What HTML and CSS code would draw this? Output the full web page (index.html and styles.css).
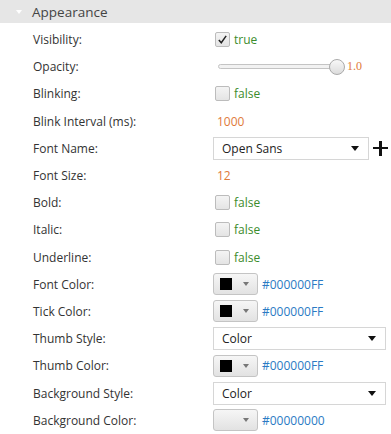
FILE: index.html
```html
<!DOCTYPE html>
<html>
<head>
<meta charset="utf-8">
<link rel="stylesheet" href="styles.css">
</head>
<body>
<div class="panel">
  <div class="header"><span class="tri"></span><span class="title">Appearance</span></div>
  <div class="rows">
    <div class="row"><span class="label">Visibility:</span><div class="ctl"><span class="check on"><svg viewBox="0 0 16 16" width="16" height="16"><path d="M3.5 8.5 L6.5 12 L12.5 3.5" fill="none" stroke="#222" stroke-width="1.8"/></svg></span><span class="bool">true</span></div></div>
    <div class="row"><span class="label">Opacity:</span><div class="ctl"><div class="slider"><div class="track"></div><div class="thumb"></div></div><span class="num serif">1.0</span></div></div>
    <div class="row"><span class="label">Blinking:</span><div class="ctl"><span class="check"></span><span class="bool">false</span></div></div>
    <div class="row"><span class="label">Blink Interval (ms):</span><div class="ctl"><span class="num pad">1000</span></div></div>
    <div class="row"><span class="label">Font Name:</span><div class="ctl"><div class="combo short"><span>Open Sans</span><span class="arrow"></span></div><span class="plus"></span></div></div>
    <div class="row"><span class="label">Font Size:</span><div class="ctl"><span class="num pad">12</span></div></div>
    <div class="row"><span class="label">Bold:</span><div class="ctl"><span class="check"></span><span class="bool">false</span></div></div>
    <div class="row"><span class="label">Italic:</span><div class="ctl"><span class="check"></span><span class="bool">false</span></div></div>
    <div class="row"><span class="label">Underline:</span><div class="ctl"><span class="check"></span><span class="bool">false</span></div></div>
    <div class="row"><span class="label">Font Color:</span><div class="ctl"><div class="cbtn"><span class="swatch"></span><span class="sarrow"></span></div><span class="hex">#000000FF</span></div></div>
    <div class="row"><span class="label">Tick Color:</span><div class="ctl"><div class="cbtn"><span class="swatch"></span><span class="sarrow"></span></div><span class="hex">#000000FF</span></div></div>
    <div class="row"><span class="label">Thumb Style:</span><div class="ctl"><div class="combo wide"><span>Color</span><span class="arrow"></span></div></div></div>
    <div class="row"><span class="label">Thumb Color:</span><div class="ctl"><div class="cbtn"><span class="swatch"></span><span class="sarrow"></span></div><span class="hex">#000000FF</span></div></div>
    <div class="row"><span class="label">Background Style:</span><div class="ctl"><div class="combo wide"><span>Color</span><span class="arrow"></span></div></div></div>
    <div class="row"><span class="label">Background Color:</span><div class="ctl"><div class="cbtn"><span class="swatch empty"></span><span class="sarrow"></span></div><span class="hex">#00000000</span></div></div>
  </div>
</div>
</body>
</html>
```
FILE: styles.css
```css
html, body { margin: 0; padding: 0; background: #fff; }
body { font-family: "Open Sans", "Noto Sans", sans-serif; font-size: 12px; color: #333; width: 391px; height: 434px; overflow: hidden; }
.header { height: 23px; background: #e6e6e6; display: flex; align-items: center; }
.tri { width: 0; height: 0; border-left: 3.5px solid transparent; border-right: 3.5px solid transparent; border-top: 4px solid #fff; margin-left: 16px; margin-right: 10px; margin-top: 1px; }
.title { font-size: 13.5px; color: #444; }
.rows { padding-top: 3px; }
.row { height: 27.2px; display: flex; align-items: center; }
.label { width: 180px; padding-left: 33px; flex: none; }
.ctl { display: flex; align-items: center; flex: 1; }
.check { width: 15px; height: 15px; box-sizing: border-box; border: 1px solid #bcbcbc; border-radius: 2px; background: linear-gradient(#f4f4f4, #e4e4e4); margin-left: 2px; margin-right: 4px; display: flex; align-items: center; justify-content: center; }
.check svg { width: 13px; height: 13px; }
.bool { color: #3c8c2c; }
.num { color: #e07a3a; }
.num.pad { padding-left: 4px; }
.serif { font-family: "Liberation Serif", serif; font-size: 12px; margin-left: 2px; }
.slider { width: 127px; height: 16px; margin-left: 5px; display: flex; align-items: center; position: relative; }
.track { flex: 1; height: 3px; border: 1px solid #c4c4c4; border-radius: 3px; background: #f2f2f2; margin-right: 6px; }
.thumb { position: absolute; right: 0; top: 0; width: 14px; height: 14px; border-radius: 50%; border: 1px solid #aaa; background: linear-gradient(#f8f8f8, #dcdcdc); }
.combo { height: 23px; box-sizing: border-box; border: 1px solid #d6d6d6; background: #fff; display: flex; align-items: center; justify-content: space-between; padding: 0 9px 0 8px; color: #222; }
.combo.short { width: 156px; }
.combo.wide { width: 173px; }
.arrow { width: 0; height: 0; border-left: 4px solid transparent; border-right: 4px solid transparent; border-top: 5px solid #111; }
.plus { width: 15px; height: 15px; margin-left: 4px; position: relative; }
.plus::before { content: ""; position: absolute; left: 0; top: 6px; width: 15px; height: 2.5px; background: #111; }
.plus::after { content: ""; position: absolute; top: 0; left: 6px; width: 2.5px; height: 15px; background: #111; }
.cbtn { width: 45px; height: 22px; box-sizing: border-box; border: 1px solid #c4c4c4; border-radius: 3px; background: linear-gradient(#f6f6f6, #e2e2e2); display: flex; align-items: center; padding-left: 6px; margin-right: 4px; }
.swatch { width: 12px; height: 12px; background: #000; }
.swatch.empty { background: transparent; }
.sarrow { width: 0; height: 0; border-left: 3.5px solid transparent; border-right: 3.5px solid transparent; border-top: 4px solid #777; margin-left: 11px; }
.hex { color: #2a7ac4; }
```
